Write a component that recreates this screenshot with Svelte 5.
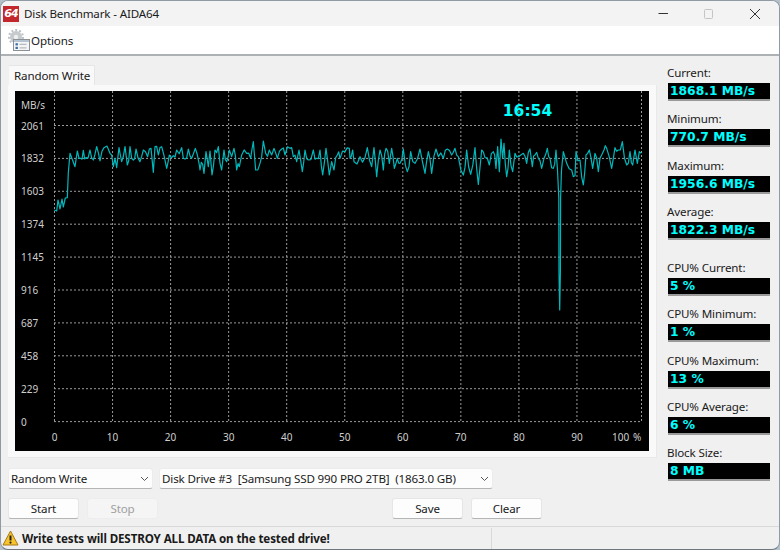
<script>
	// trace points read off the graph, grouped by horizontal offset (values at 3x)
	const head = [[54.3,210],[56.7,211],[58,200],[60,209],[62,199],[63.3,207],[65.3,198],[67.3,197.7],[68.3,173]];
	const segments = [
		[50, [[60,55],[75,95],[82,48],[92,70],[100,46],[108,68],[120,45],[130,75],[140,35],[150,78],[162,38],[180,55],[190,95],[195,70],[200,98],[207,38],[215,80],[225,35],[232,90],[240,35],[250,75],[258,42],[270,80],[280,45],[293,65],[303,40],[310,112],[315,35],[325,60],[335,35],[350,100],[358,60],[370,62],[380,45],[395,38],[405,72],[415,42],[425,70],[436,40],[448,90]]],
		[200, [[0,105],[8,88],[12,115],[18,50],[25,95],[30,48],[36,120],[45,45],[55,35],[65,105],[72,45],[80,80],[88,45],[95,65],[102,40],[110,105],[118,95],[125,60],[140,55],[152,70],[160,20],[167,105],[180,85],[190,18],[197,55],[208,45],[215,60],[222,40],[232,70],[245,42],[255,60],[270,40],[280,65],[290,80],[297,45],[307,110],[315,45],[325,75],[340,45],[350,70],[360,45],[368,120],[378,40],[388,120],[395,80],[402,105],[412,60],[420,70],[435,50],[448,40]]],
		[350, [[0,70],[8,45],[12,80],[30,65],[45,68],[52,38],[65,95],[72,38],[80,125],[90,45],[100,105],[108,40],[118,85],[125,40],[133,100],[142,70],[150,85],[160,42],[172,110],[182,50],[195,85],[210,42],[225,115],[235,50],[245,115],[258,42],[265,65],[280,70],[292,42],[305,60],[315,40],[325,65],[340,120],[350,45],[362,118],[375,38],[385,148],[395,45],[405,68],[418,90],[430,50],[438,100],[443,35],[448,110]]],
		[500, [[3,12],[8,70],[12,25],[20,125],[28,45],[38,110],[45,55],[55,65],[70,55],[80,85],[90,42],[97,95],[105,60],[115,70],[125,100],[132,70],[142,40],[150,70],[160,100],[168,45]]]
	];
	const dip = [[557.5,170],[558.8,198],[559,272],[559.7,310],[560.4,272],[560.6,198],[561.5,170]];
	const tail = [[190,50],[200,85],[215,105],[225,122],[228,50],[240,75],[250,150],[258,60],[268,45],[278,100],[285,55],[295,110],[305,60],[312,45],[320,40],[335,100],[345,38],[355,45],[367,20],[380,90],[390,50],[398,90],[405,45],[412,85],[418,50],[424,55]];

	const fromZoom = (base, pts) => pts.map(([x, y]) => [base + x / 3, 135 + y / 3]);

	// fill long runs with a midpoint that wobbles, the real graph is busier than the read-off points
	function roughen(pts) {
		const out = [];
		pts.forEach((p, i) => {
			out.push(p);
			const next = pts[i + 1];
			if (next && next[0] - p[0] > 2.5) {
				const wobble = Math.sin(i * 12.9898) * 5;
				out.push([(p[0] + next[0]) / 2, (p[1] + next[1]) / 2 + wobble]);
			}
		});
		return out;
	}

	const trace = [
		...head,
		...roughen(segments.flatMap(([base, pts]) => fromZoom(base, pts))),
		...dip,
		...roughen(fromZoom(500, tail))
	].map((p) => p.join(',')).join(' ');

	const yLabels = [2061, 1832, 1603, 1374, 1145, 916, 687, 458, 229, 0];
	const yPos = (i) => 125.5 + i * 32.9;
	const xLabels = [0, 10, 20, 30, 40, 50, 60, 70, 80, 90];
	const xPos = (i) => 54.5 + i * 58.05;

	const stats = [
		{ label: 'Current:', value: '1868.1 MB/s' },
		{ label: 'Minimum:', value: '770.7 MB/s' },
		{ label: 'Maximum:', value: '1956.6 MB/s' },
		{ label: 'Average:', value: '1822.3 MB/s' },
		{ label: 'CPU% Current:', value: '5 %', gap: true },
		{ label: 'CPU% Minimum:', value: '1 %' },
		{ label: 'CPU% Maximum:', value: '13 %' },
		{ label: 'CPU% Average:', value: '6 %' },
		{ label: 'Block Size:', value: '8 MB' }
	];
</script>

<div class="window">
	<header class="titlebar">
		<span class="app-icon">64</span>
		<span class="title">Disk Benchmark - AIDA64</span>
		<div class="caption">
			<svg width="120" height="25" viewBox="0 0 120 25">
				<path d="M0.5 12.5H10" stroke="#333" fill="none" />
				<rect x="46.5" y="8.5" width="8" height="9" rx="1" stroke="#c4c4c4" fill="none" />
				<path d="M92 8l10 10M102 8l-10 10" stroke="#333" fill="none" />
			</svg>
		</div>
	</header>

	<nav class="toolbar">
		<svg class="options-icon" width="23" height="23" viewBox="0 0 23 23">
			<circle cx="9" cy="8" r="6" fill="#c6cacd" />
			<circle cx="9" cy="8" r="7" fill="none" stroke="#bcc1c5" stroke-width="2" stroke-dasharray="2 2" />
			<circle cx="9" cy="8" r="2.2" fill="#eef0f2" />
			<rect x="6.5" y="10.5" width="16" height="11" fill="#f3f4f5" stroke="#8b9197" />
			<rect x="7" y="11" width="15" height="2" fill="#b5c4d2" />
			<rect x="8.5" y="14.2" width="2.4" height="2.2" fill="#3b6ea8" />
			<rect x="8.5" y="17.8" width="2.4" height="2.2" fill="#3b6ea8" />
			<path d="M12.5 15.3h7M12.5 18.9h7" stroke="#a8adb2" />
		</svg>
		<span>Options</span>
	</nav>

	<main class="content">
		<div class="left">
			<div class="tab">Random Write</div>
			<div class="panel">
				<svg class="chart" width="634" height="360" viewBox="15 91 634 360">
					<rect x="15" y="91" width="634" height="360" fill="#000" />
					{#each yLabels as label, i}
						<path class="grid" d="M54 {yPos(i)}H641" />
						<text class="axis" x="21" y={yPos(i) + 4}>{label}</text>
					{/each}
					{#each xLabels as label, i}
						<path class="grid" d="M{xPos(i)} 91V422" />
						<text class="axis" x={xPos(i)} y="441" text-anchor="middle">{label}</text>
					{/each}
					<path class="grid" d="M641.5 91V422" />
					<text class="axis" x="21" y="109">MB/s</text>
					<text class="axis" x="612" y="441">100</text>
					<text class="axis" x="633" y="441">%</text>
					<text class="clock" x="527.5" y="115.500" text-anchor="middle">16:54</text>
					<polyline class="trace" points={trace} />
				</svg>
			</div>

			<div class="row combos">
				<div class="combo test">
					<select><option>Random Write</option></select>
					<svg width="9" height="6" viewBox="0 0 9 6"><path d="M1 1l3.500 3.500L8 1" /></svg>
				</div>
				<div class="combo drive">
					<select><option>Disk Drive #3&nbsp; [Samsung SSD 990 PRO 2TB]&nbsp; (1863.0 GB)</option></select>
					<svg width="9" height="6" viewBox="0 0 9 6"><path d="M1 1l3.500 3.500L8 1" /></svg>
				</div>
			</div>

			<div class="row buttons">
				<button>Start</button>
				<button disabled>Stop</button>
				<button class="save">Save</button>
				<button>Clear</button>
			</div>
		</div>

		<aside class="stats">
			{#each stats as s}
				<div class="stat" class:gap={s.gap}>
					<span class="label">{s.label}</span>
					<span class="value">{s.value}</span>
				</div>
			{/each}
		</aside>
	</main>

	<footer class="status">
		<svg width="17" height="16" viewBox="0 0 17 16">
			<path d="M8.500 1L16 15H1z" fill="#f7c52b" stroke="#a8761a" stroke-linejoin="round" />
			<path d="M8.500 5.500v5" stroke="#222" stroke-width="2" />
			<circle cx="8.500" cy="12.600" r="1.100" fill="#222" />
		</svg>
		<strong>Write tests will DESTROY ALL DATA on the tested drive!</strong>
	</footer>
</div>

<style>
	:global(body) {
		background: #b4c0cc;
	}

	.window {
		width: 780px;
		height: 550px;
		box-sizing: border-box;
		display: flex;
		flex-direction: column;
		border: 1px solid #8f9aa5;
		border-bottom-color: #6e7780;
		border-radius: 8px;
		overflow: hidden;
		background: #f0f0f0;
		color: #1a1a1a;
		font-family: "Noto Sans", sans-serif;
		font-size: 11.600px;
		letter-spacing: -0.150px;
	}

	.titlebar {
		height: 25px;
		flex: none;
		display: flex;
		align-items: center;
		padding-left: 2px;
		background: #f3f3f3;
	}

	.app-icon {
		width: 16px;
		height: 16px;
		margin-right: 5px;
		background: #c1272d;
		color: #fff;
		font-family: "DejaVu Sans", sans-serif;
		font-size: 11px;
		font-weight: 700;
		font-style: italic;
		line-height: 16px;
		text-align: center;
		letter-spacing: -1px;
	}

	.caption {
		margin-left: auto;
		width: 121px;
		height: 25px;
	}

	.toolbar {
		height: 28px;
		flex: none;
		display: flex;
		align-items: center;
		gap: 1px;
		padding-left: 6px;
		background: #fff;
		border-bottom: 2px solid #aeb1b3;
	}

	.content {
		flex: 1;
		display: flex;
		padding: 9px 9px 0 7px;
		min-height: 0;
	}

	.left {
		width: 650px;
	}

	.tab {
		width: 86px;
		height: 20px;
		box-sizing: border-box;
		margin-left: 1px;
		padding-left: 5px;
		line-height: 20px;
		white-space: nowrap;
		background: #f9f9f9;
		border-top: 1px solid #e6e6e6;
		border-right: 1px solid #e6e6e6;
	}

	.panel {
		width: 649px;
		height: 373px;
		box-sizing: border-box;
		padding: 6px 0 0 7px;
		background: #f9f9f9;
		border-right: 1px solid #e9e9e9;
		border-bottom: 1px solid #e9e9e9;
	}

	.chart {
		display: block;
	}

	.grid {
		fill: none;
		stroke: #9a9a9a;
		stroke-width: 1;
		stroke-dasharray: 2 2;
	}

	.axis {
		fill: #cfcfcf;
		font-size: 10px;
		letter-spacing: 0;
	}

	.clock {
		fill: #00ffff;
		font-family: "DejaVu Sans", sans-serif;
		font-size: 15.500px;
		font-weight: 700;
		letter-spacing: 0;
	}

	.trace {
		fill: none;
		stroke: #00b8bc;
		stroke-width: 1.200;
		stroke-linejoin: round;
	}

	.row {
		display: flex;
	}

	.combos {
		gap: 6px;
		margin-top: 10px;
	}

	.combo {
		position: relative;
		height: 21px;
	}

	.combo.test {
		width: 145px;
	}

	.combo.drive {
		width: 334px;
	}

	.combo select {
		width: 100%;
		height: 100%;
		box-sizing: border-box;
		appearance: none;
		padding: 0 0 0 2px;
		background: #fdfdfd;
		border: 1px solid #ececec;
		border-bottom-color: #b5b5b5;
		border-radius: 3px;
		color: #1a1a1a;
		font: inherit;
		letter-spacing: inherit;
	}

	.combo svg {
		position: absolute;
		right: 4px;
		top: 8px;
		fill: none;
		stroke: #555;
	}

	.buttons {
		gap: 8px;
		margin-top: 9px;
	}

	button {
		width: 71px;
		height: 21px;
		padding: 0;
		background: #fdfdfd;
		border: 1px solid #e6e6e6;
		border-bottom-color: #b5b5b5;
		border-radius: 3px;
		color: #1a1a1a;
		font: inherit;
		letter-spacing: inherit;
	}

	button:disabled {
		background: #f5f5f5;
		border-color: #ededed;
		color: #a0a0a0;
	}

	.save {
		margin-left: 226px;
	}

	.stats {
		margin-left: 10px;
		flex: 1;
		display: flex;
		flex-direction: column;
		gap: 10.250px;
	}

	.stat {
		display: flex;
		flex-direction: column;
	}

	.stat.gap {
		margin-top: 10px;
	}

	.label {
		height: 18px;
		line-height: 16px;
	}

	.value {
		width: 102px;
		height: 18px;
		margin-left: 1px;
		box-sizing: border-box;
		padding-left: 2px;
		line-height: 16px;
		background: #000;
		border-bottom: 2px solid #9a9a9a;
		color: #00ffff;
		font-family: "DejaVu Sans", sans-serif;
		font-size: 12.300px;
		font-weight: 700;
		letter-spacing: 0;
	}

	.status {
		height: 22px;
		flex: none;
		display: flex;
		align-items: center;
		gap: 3px;
		padding-left: 1px;
		border-top: 1px solid #d9d9d9;
	}

	.status strong {
		width: 469px;
		height: 21px;
		line-height: 21px;
		font-size: 11.600px;
		letter-spacing: -0.120px;
		border-right: 1px solid #d9d9d9;
	}
</style>
